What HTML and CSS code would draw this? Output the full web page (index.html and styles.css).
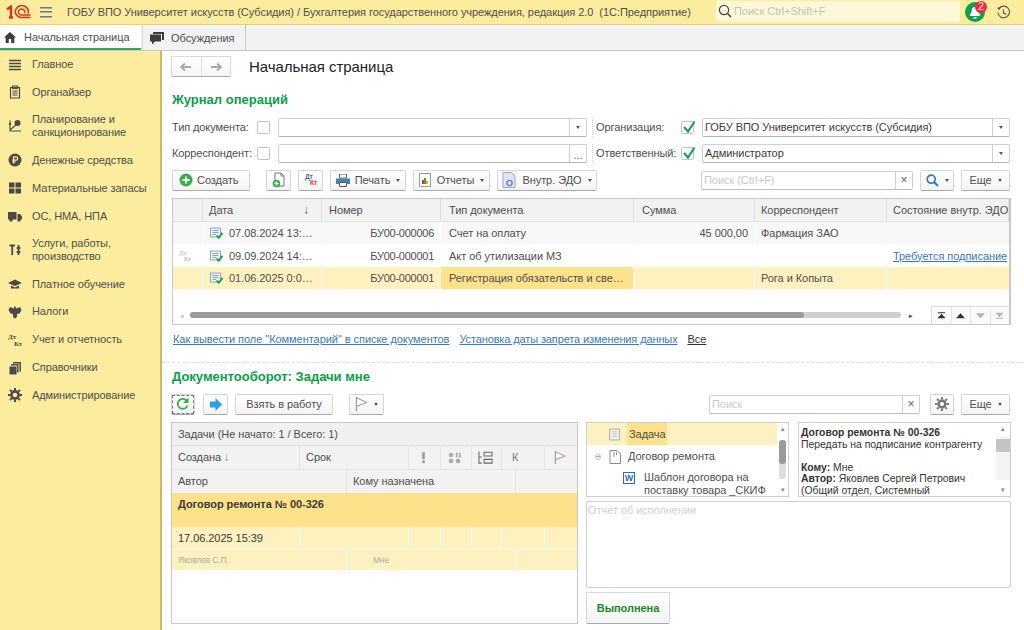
FILE: index.html
```html
<!DOCTYPE html>
<html lang="ru">
<head>
<meta charset="utf-8">
<title>1С:Предприятие</title>
<link rel="stylesheet" href="styles.css">
</head>
<body>
<header class="top">
  <svg class="logo" viewBox="0 0 25 14" width="25" height="14"><path d="M1 4.5 L5 1.5 V12 M3 12.5 H7" fill="none" stroke="#e0301e" stroke-width="2.4"/><path d="M22 8.5 A6.5 6 0 1 0 15 12.5 H24.5" fill="none" stroke="#e0301e" stroke-width="1.6"/><path d="M18.5 8.5 A3.2 3 0 1 0 15 10.2 H24.5" fill="none" stroke="#e0301e" stroke-width="1.4" transform="translate(0,-.2)"/></svg>
  <span class="burger"><i></i><i></i><i></i></span>
  <span class="app-title">ГОБУ ВПО Университет искусств (Субсидия) / Бухгалтерия государственного учреждения, редакция 2.0&nbsp; (1С:Предприятие)</span>
  <div class="global-search">
    <svg viewBox="0 0 14 14" width="14" height="14"><circle cx="6" cy="6" r="4.6" fill="none" stroke="#444" stroke-width="1.2"/><path d="M9.5 9.5 L13 13" stroke="#444" stroke-width="1.6"/></svg>
    <span>Поиск Ctrl+Shift+F</span>
  </div>
  <div class="bell">
    <svg viewBox="0 0 20 20" width="20" height="20"><circle cx="10" cy="10" r="10" fill="#0da14f"/><path d="M10 5 C7 5 6.5 8 6.5 10 L4.5 14 H15.5 L13.5 10 C13.5 8 13 5 10 5Z M8.5 15 H11.5 V16.5 H8.5Z" fill="#fff"/></svg>
    <b>2</b>
  </div>
  <svg class="history" viewBox="0 0 16 16" width="15" height="15"><path d="M3 4 A6.2 6.2 0 1 1 2 8" fill="none" stroke="#555" stroke-width="1.2"/><path d="M1 3 L3.6 5.6 L5 2.4Z" fill="#555"/><path d="M8 4.5 V8.5 L11 10" fill="none" stroke="#555" stroke-width="1.2"/></svg>
</header>
<nav class="tabs">
  <div class="tab active">
    <svg viewBox="0 0 12 11" width="12" height="11"><path d="M6 0 L12 5.5 H10.3 V11 H7.2 V7 H4.8 V11 H1.7 V5.5 H0Z" fill="#3d3d3d"/></svg>
    <span>Начальная страница</span>
  </div>
  <div class="tab second">
    <svg viewBox="0 0 14 13" width="14" height="13"><path d="M3 0 H14 V8 H12 V2 H3Z" fill="#3d3d3d"/><path d="M0 2.5 H11 V9.5 H5 L2 12.5 V9.5 H0Z" fill="#3d3d3d"/></svg>
    <span>Обсуждения</span>
  </div>
</nav>
<div class="shell">
  <aside class="side">
    <a class="nav"><svg viewBox="0 0 14 14"><path d="M1 2.5H13M1 5.5H13M1 8.5H13M1 11.5H13" stroke="#4a4a4a" stroke-width="1.7"/></svg><span>Главное</span></a>
    <a class="nav"><svg viewBox="0 0 14 14"><path d="M2.5 2.5H11.5V13H2.5Z M4.5 1H9.5V3.5H4.5Z M4.5 6H9.5M4.5 8H9.5M4.5 10H9.5" fill="none" stroke="#4a4a4a" stroke-width="1.2"/></svg><span>Органайзер</span></a>
    <a class="nav two"><svg viewBox="0 0 14 14"><path d="M2 1.5V12H13M2 11L9 5" fill="none" stroke="#4a4a4a" stroke-width="1.1"/><circle cx="9.5" cy="4" r="3" fill="#4a4a4a"/><circle cx="2" cy="5" r="1.2" fill="#4a4a4a"/></svg><span>Планирование и<br>санкционирование</span></a>
    <a class="nav"><svg viewBox="0 0 14 14"><circle cx="7" cy="7" r="6.5" fill="#4a4a4a"/><path d="M5.6 10.5V3.8H8A1.7 1.7 0 0 1 8 7.2H4.4M4.4 8.8H7.5" fill="none" stroke="#fbec9e" stroke-width="1.2"/></svg><span>Денежные средства</span></a>
    <a class="nav"><svg viewBox="0 0 14 14"><path d="M1 1.5H6.5V6.5H1ZM7.5 1.5H13V6.5H7.5ZM1 7.5H6.5V12.5H1ZM7.5 7.5H13V12.5H7.5Z" fill="#4a4a4a"/></svg><span>Материальные запасы</span></a>
    <a class="nav"><svg viewBox="0 0 14 14"><path d="M0 3H8.5V10.5H0ZM9.5 5H12L14 7.5V10.5H9.5Z" fill="#4a4a4a"/><circle cx="3" cy="11" r="1.7" fill="#4a4a4a"/><circle cx="11" cy="11" r="1.7" fill="#4a4a4a"/></svg><span>ОС, НМА, НПА</span></a>
    <a class="nav two"><svg viewBox="0 0 14 14"><path d="M1.5 2.5H7M4.2 2.5V12M10.5 2V12M8.7 5H12.3M8.7 9H12.3" fill="none" stroke="#4a4a4a" stroke-width="1.8"/></svg><span>Услуги, работы,<br>производство</span></a>
    <a class="nav"><svg viewBox="0 0 14 14"><path d="M7 2.5L14 6L7 9L0 6Z M3 8.5L7 10.5L11 8.5V11.5H3Z" fill="#4a4a4a"/></svg><span>Платное обучение</span></a>
    <a class="nav"><svg viewBox="0 0 14 14"><path d="M7 1L8.5 3.5L12 2L13.5 5L11.5 8.5L9 9V12L7 13.5L5 12V9L2.5 8.5L.5 5L2 2L5.5 3.5Z" fill="#4a4a4a"/></svg><span>Налоги</span></a>
    <a class="nav"><svg viewBox="0 0 14 14"><text x="0" y="6" class="dk">Дт</text><text x="6" y="13" class="dk">Кт</text></svg><span>Учет и отчетность</span></a>
    <a class="nav"><svg viewBox="0 0 14 14"><path d="M5 1H13V10.5H11.5V2.5H5Z M3 3H10.5V11.5H9V4.5H3Z M1.5 5.5H8.5V13.5H1.5Z" fill="#4a4a4a"/></svg><span>Справочники</span></a>
    <a class="nav"><svg viewBox="0 0 14 14"><circle cx="7" cy="7" r="3.6" fill="none" stroke="#4a4a4a" stroke-width="2.6"/><path d="M7 0V14M0 7H14M2 2L12 12M12 2L2 12" stroke="#4a4a4a" stroke-width="2" stroke-dasharray="2.2 9.6 2.2 0"/></svg><span>Администрирование</span></a>
  </aside>

  <main class="main">
    <div class="pagehead">
      <div class="history-btns">
        <span class="hb"><svg viewBox="0 0 12 10" width="12" height="10"><path d="M1 5H11M5 1.5L1 5L5 8.5" fill="none" stroke="#a8a8a8" stroke-width="1.8"/></svg></span>
        <span class="hb"><svg viewBox="0 0 12 10" width="12" height="10"><path d="M1 5H11M7 1.5L11 5L7 8.5" fill="none" stroke="#a8a8a8" stroke-width="1.8"/></svg></span>
      </div>
      <h1>Начальная страница</h1>
    </div>

    <h2 class="group journal">Журнал операций</h2>

    <div class="filter">
      <label>Тип документа:</label><span class="cb"></span>
      <div class="field w309"><span class="val"></span><span class="drop"><i class="tri"></i></span></div>
      <span class="sep"></span>
      <label>Организация:</label><span class="cb"><svg viewBox="0 0 14 14"><path d="M2 7L6 11.5L12.5 1.5" fill="none" stroke="#0da14f" stroke-width="2"/></svg></span>
      <div class="field w308"><span class="val">ГОБУ ВПО Университет искусств (Субсидия)</span><span class="drop"><i class="tri"></i></span></div>
    </div>
    <div class="filter second">
      <label>Корреспондент:</label><span class="cb"></span>
      <div class="field w309"><span class="val"></span><span class="drop dots">...</span></div>
      <span class="sep"></span>
      <label>Ответственный:</label><span class="cb"><svg viewBox="0 0 14 14"><path d="M2 7L6 11.5L12.5 1.5" fill="none" stroke="#0da14f" stroke-width="2"/></svg></span>
      <div class="field w308"><span class="val">Администратор</span><span class="drop"><i class="tri"></i></span></div>
    </div>

    <div class="toolbar tb1">
      <button class="btn create"><svg viewBox="0 0 14 14" width="14" height="14"><circle cx="7" cy="7" r="6.5" fill="#36ae4a"/><path d="M7 3.5V10.5M3.5 7H10.5" stroke="#fff" stroke-width="2"/></svg>Создать</button>
      <button class="btn ico gap16"><svg viewBox="0 0 16 16" width="16" height="16"><path d="M4 1H10L13 4V14H4Z" fill="#fff" stroke="#777"/><path d="M10 1V4H13" fill="none" stroke="#777"/><circle cx="5.5" cy="11.5" r="3.8" fill="#36ae4a"/><path d="M5.5 9.5V13.5M3.5 11.5H7.5" stroke="#fff" stroke-width="1.3"/></svg></button>
      <button class="btn ico gap7 dtkt"><span class="d">Дт</span><span class="k">Кт</span></button>
      <button class="btn print gap7"><svg viewBox="0 0 14 13" width="14" height="13"><path d="M3.5 0H10.5V4H3.5Z" fill="#fff" stroke="#3d6a96"/><path d="M0 4.5H14V10H11V8H3V10H0Z" fill="#4a7fb0"/><path d="M3.5 8.5H10.5V12.5H3.5Z" fill="#fff" stroke="#555"/></svg>Печать<i class="tri"></i></button>
      <button class="btn reports gap8"><svg viewBox="0 0 12 14" width="12" height="14"><path d="M.5 .5H11.5V13.5H.5Z" fill="#fff" stroke="#999"/><path d="M3 7H5V11H3Z" fill="#d33"/><path d="M5 5H7V11H5Z" fill="#3a3"/><path d="M7 8H9V11H7Z" fill="#e8b020"/></svg>Отчеты<i class="tri"></i></button>
      <button class="btn edo gap7"><svg viewBox="0 0 14 16" width="14" height="16"><path d="M1 .5H9.5L13 4V15.5H1Z" fill="#dfe6f2" stroke="#9aa8c4"/><circle cx="7.5" cy="11" r="2.6" fill="none" stroke="#6a7fc0" stroke-width="1.4"/></svg>Внутр. ЭДО<i class="tri"></i></button>
      <div class="search s212 push"><span class="ph">Поиск (Ctrl+F)</span><span class="clear">×</span></div>
      <button class="btn find gap7"><svg viewBox="0 0 13 13" width="13" height="13"><circle cx="5.2" cy="5.2" r="4" fill="none" stroke="#2b7bbd" stroke-width="1.7"/><path d="M8 8L12 12" stroke="#2b7bbd" stroke-width="2"/></svg><i class="tri"></i></button>
      <button class="btn more gap7">Еще<i class="tri"></i></button>
    </div>

    <section class="table">
      <div class="tr thead">
        <div class="td"></div><div class="td date-h">Дата<span class="sort">↓</span></div><div class="td">Номер</div><div class="td">Тип документа</div><div class="td">Сумма</div><div class="td">Корреспондент</div><div class="td">Состояние внутр. ЭДО</div>
      </div>
      <div class="tr r1">
        <div class="td"></div>
        <div class="td dt"><svg class="docico" viewBox="0 0 13 12"><use href="#doc"/></svg>07.08.2024 13:…</div><div class="td num">БУ00-000006</div><div class="td">Счет на оплату</div><div class="td sum">45 000,00</div><div class="td">Фармация ЗАО</div><div class="td"></div>
      </div>
      <div class="tr r2">
        <div class="td dk-cell"><span class="d">Дт</span><span class="k">Кт</span></div>
        <div class="td dt"><svg class="docico" viewBox="0 0 13 12"><use href="#doc"/></svg>09.09.2024 14:…</div><div class="td num">БУ00-000001</div><div class="td">Акт об утилизации МЗ</div><div class="td"></div><div class="td"></div><div class="td"><a class="link">Требуется подписание</a></div>
      </div>
      <div class="tr r3">
        <div class="td"></div>
        <div class="td dt"><svg class="docico" viewBox="0 0 13 12"><use href="#doc"/></svg>01.06.2025 0:0…</div><div class="td num">БУ00-000001</div><div class="td cur">Регистрация обязательств и све…</div><div class="td"></div><div class="td">Рога и Копыта</div><div class="td"></div>
      </div>
      <div class="scrollrow">
        <span class="arr">◂</span>
        <div class="track"><div class="thumb"></div></div>
        <span class="arr dark">▸</span>
        <div class="pager">
          <span><svg viewBox="0 0 10 7"><path d="M1 0H9V1H1ZM5 1.5L9.5 6.5H.5Z" fill="#333"/></svg></span>
          <span><svg viewBox="0 0 10 7"><path d="M5 1L10 6.5H0Z" fill="#333"/></svg></span>
          <span><svg viewBox="0 0 10 7"><path d="M0 1H10L5 6.5Z" fill="#b5b5b5"/></svg></span>
          <span><svg viewBox="0 0 10 7"><path d="M.5 .5H9.5L5 5.5ZM1 6H9V7H1Z" fill="#b5b5b5"/></svg></span>
        </div>
      </div>
    </section>

    <div class="links">
      <a class="link">Как вывести поле "Комментарий" в списке документов</a>
      <a class="link">Установка даты запрета изменения данных</a>
      <a class="all">Все</a>
    </div>

    <hr class="divider">

    <h2 class="group flow">Документооборот: Задачи мне</h2>

    <div class="toolbar tb2">
      <button class="btn ico focus"><svg viewBox="0 0 14 14" width="14" height="14"><path d="M11.5 8.5A5 5 0 1 1 10.5 3.5" fill="none" stroke="#36ae4a" stroke-width="1.8"/><path d="M12.5 .5V6H7Z" fill="#36ae4a"/></svg></button>
      <button class="btn ico g8"><svg viewBox="0 0 12 13" width="12" height="13"><path d="M0 3.5H5.5V0L12 6.5L5.5 13V9.5H0Z" fill="#2f9fe0"/></svg></button>
      <button class="btn take g7">Взять в работу</button>
      <button class="btn flag g16"><svg viewBox="0 0 13 14" width="13" height="14"><path d="M1.5 0V14" stroke="#999" stroke-width="1.3"/><path d="M2 1L12 5.5L2 9" fill="#fff" stroke="#a88" stroke-width="1"/></svg><i class="tri"></i></button>
      <div class="search s211 push"><span class="ph">Поиск</span><span class="clear">×</span></div>
      <button class="btn ico gear gap10"><svg viewBox="0 0 14 14" width="14" height="14"><circle cx="7" cy="7" r="3.4" fill="none" stroke="#777" stroke-width="2.6"/><path d="M7 0V14M0 7H14M2 2L12 12M12 2L2 12" stroke="#777" stroke-width="2" stroke-dasharray="2.2 9.6 2.2 0"/></svg></button>
      <button class="btn more gap7">Еще<i class="tri"></i></button>
    </div>

    <div class="tasks-wrap">
      <section class="tasks">
        <div class="cap">Задачи (Не начато: 1 / Всего: 1)</div>
        <div class="trow h1"><div>Создана <span class="sort2">↓</span></div><div>Срок</div>
          <div class="c"><svg viewBox="0 0 6 14" width="5" height="12"><path d="M1.5 0H4.5V8.5H1.5Z" fill="#999"/><circle cx="3" cy="11.5" r="1.8" fill="#999"/></svg></div>
          <div class="c"><svg viewBox="0 0 16 13" width="14" height="12"><g fill="#aaa"><circle cx="3.5" cy="3" r="2.6"/><path d="M9 .5H11V5.5H9ZM12.5 .5H14.5V5.5H12.5Z"/><circle cx="3.5" cy="10" r="2.6"/><circle cx="11.5" cy="10" r="2.6"/></g></svg></div>
          <div class="c"><svg viewBox="0 0 16 13" width="15" height="13"><path d="M1 0V12.5H4M1 6H4M6.5 1H15V5H6.5ZM6.5 8.5H15V12.5H6.5Z" fill="none" stroke="#666" stroke-width="1.1"/></svg></div>
          <div class="k">К</div>
          <div class="c"><svg viewBox="0 0 13 14" width="12" height="13"><path d="M1.5 0V14" stroke="#999" stroke-width="1.3"/><path d="M2 1L12 5.5L2 9" fill="#fff" stroke="#a88" stroke-width="1"/></svg></div>
        </div>
        <div class="trow h2"><div>Автор</div><div>Кому назначена</div><div></div></div>
        <div class="grp">Договор ремонта № 00-326</div>
        <div class="trow d1"><div>17.06.2025 15:39</div><div></div><div></div><div></div><div></div><div></div><div></div></div>
        <div class="trow d2"><div>Яковлев С.П.</div><div class="to">Мне</div><div></div></div>
      </section>

      <div class="rightcol">
        <div class="panels">
          <div class="panel tree">
            <div class="tree-body">
              <div class="node sel"><svg viewBox="0 0 12 14" width="11" height="13"><path d="M.5 1H11.5V13H.5Z" fill="#f1efe8" stroke="#a8a8a8"/><path d="M3 4H9M3 6.5H9M3 9H9" stroke="#c8c8c8"/></svg><span>Задача</span></div>
              <div class="node doc"><i class="minus"></i><svg viewBox="0 0 12 14" width="12" height="14"><path d="M1 .5H8L11.5 4V13.5H1Z" fill="#fff" stroke="#888"/><path d="M5 2V7M7.5 2V5" stroke="#888"/></svg><span>Договор ремонта</span></div>
              <div class="node word"><b class="w">W</b><span>Шаблон договора на поставку товара _СКИФ</span></div>
            </div>
            <div class="vscroll light"><em>▴</em><s></s><em>▾</em></div>
          </div>
          <div class="panel info">
            <div class="info-body"><b>Договор ремонта № 00-326</b><br>Передать на подписание контрагенту<br><br><b>Кому:</b> Мне<br><b>Автор:</b> Яковлев Сергей Петрович<br>(Общий отдел, Системный</div>
            <div class="vscroll square"><em>▴</em><s></s><em>▾</em></div>
          </div>
        </div>
        <div class="report">Отчет об исполнении</div>
        <button class="btn done">Выполнена</button>
      </div>
    </div>
  </main>
</div>
<svg class="defs" width="0" height="0"><defs><g id="doc"><path d="M.5 1H10.5V10H.5Z" fill="#eef2f6" stroke="#8fa3b8"/><path d="M2.5 3.5H8.5M2.5 5.5H8.5M2.5 7.5H6" stroke="#8fa3b8"/><path d="M6.5 8.5L8.7 10.8L12.5 5.8" fill="none" stroke="#19a538" stroke-width="1.8"/></g></defs></svg>
</body>
</html>
```
FILE: styles.css
```css
* { box-sizing: border-box; }
html, body { margin: 0; padding: 0; }
body {
  width: 1024px; height: 630px; overflow: hidden; background: #fff;
  font: 11px/13px "Liberation Sans", Arial, sans-serif; color: #4f4f4f; letter-spacing: -0.05px;
  display: flex; flex-direction: column;
}
.defs { position: absolute; }
a { cursor: pointer; }

/* top bar */
.top {
  height: 25px; flex: none; display: flex; align-items: center;
  background: #fbec9e; border-bottom: 1px solid #e2cf7a; padding-left: 6px;
}
.logo { flex: none; }
.burger { width: 12px; height: 11px; margin-left: 9px; display: flex; flex-direction: column; justify-content: space-between; flex: none; }
.burger i { display: block; height: 2px; background: #777; border-bottom: 1px solid #aaa; }
.app-title { margin-left: 15px; white-space: nowrap; width: 649px; flex: none; }
.global-search {
  width: 244px; height: 21px; flex: none; background: #fef7d8; border-radius: 2px;
  display: flex; align-items: center; padding-left: 2px; color: #c4c4b4; margin-top: -2px;
}
.global-search svg { margin-right: 2px; }
.bell { position: relative; width: 20px; height: 20px; margin-left: 5px; flex: none; }
.bell svg { display: block; }
.bell b {
  position: absolute; top: -1px; right: -2px; width: 12px; height: 12px; border-radius: 50%;
  background: #ee2b3a; color: #fff; font-size: 10px; line-height: 12px; text-align: center; font-weight: 400;
}
.history { margin-left: 11px; flex: none; }

/* tabs */
.tabs { height: 26px; flex: none; display: flex; background: #f2f2f2; border-bottom: 1px solid #c8c8c8; }
.tab { display: flex; align-items: center; height: 25px; padding-top: 1px; }
.tab.active { width: 141px; background: #fff; border-bottom: 2px solid #2eaa5e; padding-left: 4px; }
.tab.active span { margin-left: 8px; }
.tab.second { width: 104px; border-left: 1px solid #d8d8d8; border-right: 1px solid #c8c8c8; margin-left: 1px; padding-left: 7px; }
.tab.second span { margin-left: 7px; }

.shell { flex: 1; display: flex; min-height: 0; }

/* sidebar */
.side { width: 162px; flex: none; background: #fbec9e; border-right: 2px solid #cdb95e; }
.nav { height: 27.8px; display: flex; align-items: center; padding-left: 8px; letter-spacing: -0.1px; }
.nav:first-child { margin-top: -0.3px; }
.nav.two { height: 40.3px; }
.nav svg { width: 14px; height: 14px; flex: none; margin-right: 10px; }
.nav span { line-height: 13px; }
.dk { font: 700 7px "Liberation Serif", serif; fill: #4a4a4a; }

/* main */
.main { flex: 1; min-width: 0; padding: 5px 14px 0 9px; }
.pagehead { display: flex; align-items: center; height: 21px; }
.history-btns {
  width: 60px; height: 21px; display: flex; border: 1px solid #d8d8d8; border-bottom-color: #aaa; border-radius: 2px;
  background: linear-gradient(#fff, #f4f4f4);
}
.hb { flex: 1; display: flex; align-items: center; justify-content: center; }
.hb + .hb { border-left: 1px solid #e0e0e0; }
h1 { font: 400 15px/18px "Liberation Sans", Arial, sans-serif; color: #222; margin: 0 0 0 18px; }
.group { font: 700 13px/16px "Liberation Sans", Arial, sans-serif; color: #0b9e4a; margin: 0 0 0 1px; letter-spacing: 0; }
.journal { margin-top: 15px; }

.filter { display: flex; align-items: center; height: 19px; margin-left: 1px; width: 838px; margin-top: 10px; }
.filter.second { margin-top: 7px; }
.filter label { width: 85px; flex: none; white-space: nowrap; letter-spacing: -0.1px; }
.cb { width: 13px; height: 13px; flex: none; margin-right: 8px; border: 1px solid #c4c4c4; border-radius: 2px; background: #fff; position: relative; }
.cb svg { position: absolute; left: 0; top: -2px; width: 14px; height: 14px; }
.field { height: 19px; display: flex; border: 1px solid #cfcfcf; border-bottom-color: #b4b4b4; border-radius: 2px; flex: none; background: #fff; }
.w309 { width: 309px; }
.w308 { width: 308px; }
.val { flex: 1; padding-left: 2px; line-height: 17px; color: #3c3c3c; white-space: nowrap; }
.drop { width: 17px; border-left: 1px solid #cfcfcf; display: flex; align-items: center; justify-content: center; }
.dots { color: #666; line-height: 14px; align-items: flex-end; }
.sep { width: 9px; height: 19px; flex: none; position: relative; }
.sep::after { content: ""; position: absolute; left: 5px; top: 0; height: 19px; border-left: 1px dotted #d0d0d0; }
.tri { display: inline-block; width: 0; height: 0; border: 2.5px solid transparent; border-top: 3px solid #555; border-bottom: 0; flex: none; }

.toolbar { display: flex; align-items: center; height: 22px; }
.tb1 { margin-top: 6px; margin-left: 1px; width: 838px; }
.btn {
  height: 21px; border: 1px solid #d6d6d6; border-bottom: 1px solid #a8a8a8; border-radius: 2px;
  background: linear-gradient(#fff, #f3f3f3); display: flex; align-items: center; justify-content: center;
  font: 11px/13px "Liberation Sans", Arial, sans-serif; letter-spacing: inherit; color: #4f4f4f; padding: 0; flex: none;
}
.btn .tri { margin-left: 6px; }
.create { width: 78px; justify-content: flex-start; padding-left: 6px; }
.create svg { margin-right: 4px; }
.ico { width: 25px; }
.gap16 { margin-left: 16px; }
.gap7 { margin-left: 7px; }
.gap8 { margin-left: 7px; }
.gap10 { margin-left: 10px; }
.g7 { margin-left: 7px; }
.g8 { margin-left: 8px; }
.g16 { margin-left: 16px; }
.dtkt { flex-direction: column; align-items: flex-start; padding-left: 6px; font: 700 6.5px/6.5px "Liberation Sans", sans-serif; }
.dtkt .d { color: #3f6f9f; }
.dtkt .k { color: #e03030; margin-left: 5px; }
.print { width: 76px; }
.print svg { margin-right: 5px; }
.reports { width: 77px; }
.reports svg { margin-right: 6px; }
.edo { width: 100px; }
.edo svg { margin-right: 6px; }
.search { height: 19px; display: flex; border: 1px solid #cfcfcf; border-bottom-color: #bbb; border-radius: 2px; background: #fff; flex: none; }
.push { margin-left: auto; }
.s212 { width: 212px; }
.s211 { width: 211px; }
.ph { flex: 1; padding-left: 2px; line-height: 17px; color: #c8c8c8; }
.clear { width: 17px; border-left: 1px solid #cfcfcf; text-align: center; line-height: 17px; font-size: 12px; color: #666; }
.find { width: 34px; }
.more { width: 49px; }

/* table */
.table { margin-top: 7px; margin-left: 1px; width: 839px; height: 127px; border: 1px solid #c8c8c8; border-right-width: 2px; display: flex; flex-direction: column; }
.tr { display: grid; grid-template-columns: 30px 119px 119px 193px 121px 132px 1fr; }
.td { padding: 0 6px; white-space: nowrap; overflow: hidden; display: flex; align-items: center; border-right: 1px solid #fff; }
.td:last-child { border-right: 0; }
.td:nth-child(3) { padding-left: 7px; }
.td:nth-child(4), .td:nth-child(5) { padding-left: 8px; }
.thead { height: 23px; background: #f2f2f2; border-bottom: 1px solid #e3e3e3; }
.thead .td { border-right: 1px solid #dedede; }
.date-h { justify-content: space-between; padding-right: 12px; }
.sort { font-size: 12px; color: #555; }
.r1 { height: 23px; background: #f7f7f7; border-bottom: 1px solid #fff; }
.r2 { height: 22px; background: #fff; }
.r3 { height: 23px; background: #fef1c0; border-bottom: 1px solid #fbf8ee; }
.dt { padding-left: 7px; }
.docico { width: 13px; height: 12px; margin-right: 6px; flex: none; }
.td.num { justify-content: flex-end; padding-right: 6px; letter-spacing: -0.25px; }
.sum { justify-content: flex-end; padding-right: 6px; }
.cur { background: #fde28b; }
.dk-cell { flex-direction: column; align-items: flex-start; justify-content: center; font: 6.5px/6.5px "Liberation Serif", serif; color: #aaa; }
.dk-cell .k { margin-left: 5px; }
.link { color: #3a76c4; text-decoration: underline; text-underline-offset: 1px; white-space: nowrap; }
.link + .link { letter-spacing: -0.12px; }
.scrollrow { flex: 1; display: flex; align-items: flex-end; }
.arr { width: 17px; text-align: center; font-size: 7px; color: #bbb; line-height: 17px; height: 17px; flex: none; }
.arr.dark { color: #444; width: 19px; }
.track { width: 711px; height: 6px; margin-bottom: 6px; background: #d0d0d0; border-radius: 3px; flex: none; }
.thumb { width: 614px; height: 6px; background: #9a9a9a; border-radius: 3px; }
.pager { margin-left: auto; display: flex; border-top: 1px solid #ddd; border-left: 1px solid #ddd; height: 18px; width: 78px; }
.pager span { flex: 1; display: flex; align-items: center; justify-content: center; border-right: 1px solid #e4e4e4; background: #f9f9f9; }
.pager span:last-child { border-right: 0; }
.pager svg { width: 9px; height: 7px; }

.links { display: flex; margin-top: 8px; margin-left: 2px; height: 13px; gap: 10px; }
.all { color: #333; text-decoration: underline; }
.divider { border: 0; border-top: 1px dashed #dcdcdc; margin: 16px -14px 0 -9px; }
.flow { margin-top: 6px; }

/* second toolbar */
.tb2 { margin-top: 8px; height: 22px; width: 839px; }
.focus { width: 24px; outline: 1px dashed #777; outline-offset: -2px; }
.take { width: 98px; }
.flag { width: 35px; }
.gear { width: 24px; }

/* tasks */
.tasks-wrap { display: flex; margin-top: 7px; height: 202px; width: 840px; }
.tasks { width: 407px; height: 202px; flex: none; border: 1px solid #c8c8c8; }
.cap { height: 23px; line-height: 22px; background: #f0f0f0; padding-left: 6px; border-bottom: 1px solid #e0e0e0; }
.trow { display: grid; }
.trow > div { display: flex; align-items: center; padding-left: 6px; border-right: 1px solid #e3e3e3; white-space: nowrap; }
.trow > div:last-child { border-right: 0; }
.h1, .d1 { grid-template-columns: 128px 109px 32px 31px 30px 43px 1fr; }
.h2, .d2 { grid-template-columns: 175px 169px 1fr; }
.h1 { height: 24px; background: #f2f2f2; border-bottom: 1px solid #e3e3e3; }
.h2 { height: 23px; background: #f2f2f2; }
.trow .c { padding: 0 3px 0 0; justify-content: center; }
.trow .k { padding-left: 10px; color: #777; }
.sort2 { font-size: 12px; margin-left: 2px; color: #888; }
.grp { height: 34px; background: #fde28b; font-weight: 700; color: #3a3a3a; padding: 4px 0 0 6px; line-height: 13px; border-top: 1px solid #fbdf8a; }
.d1 { height: 23px; background: #fef1c0; color: #3a3a3a; border-bottom: 1px solid #fbf8ee; }
.d2 { height: 20px; background: #fef1c0; font-size: 8.3px; color: #aaa; }
.d1 > div, .d2 > div { border-right-color: #fff; }
.d2 .to { padding-left: 26px; }

/* right column */
.rightcol { width: 425px; margin-left: 8px; flex: none; }
.panels { display: flex; justify-content: space-between; height: 75px; }
.panel { border: 1px solid #cfcfcf; display: flex; overflow: hidden; background: #fff; }
.tree { width: 203px; }
.info { width: 213px; }
.tree-body { flex: 1; min-width: 0; }
.node { display: flex; align-items: center; height: 22px; }
.node.sel { background: #fef1c0; padding-left: 22px; }
.node.sel span { background: #fde28b; height: 22px; line-height: 22px; padding-left: 2px; margin-left: 7px; width: 40px; }
.node.doc { padding-left: 8px; height: 23px; }
.minus { width: 6px; height: 6px; border: 1px solid #bbb; border-radius: 50%; margin-right: 8px; flex: none; position: relative; }
.minus::after { content: ""; position: absolute; left: 0; top: 1px; width: 4px; height: 1px; background: #aaa; }
.node.doc span { margin-left: 7px; }
.node.word { align-items: flex-start; padding: 4px 0 0 36px; height: 30px; }
.word span { line-height: 13px; margin-left: 9px; width: 140px; margin-top: -1px; }
.w { width: 12px; height: 12px; border: 1px solid #2b6cb0; color: #2b6cb0; font: 700 9px/10px "Liberation Sans", sans-serif; text-align: center; flex: none; }
.vscroll { width: 11px; flex: none; display: flex; flex-direction: column; font-size: 7px; line-height: 12px; text-align: center; color: #888; }
.vscroll em { font-style: normal; height: 12px; }
.vscroll s { flex: 1; display: block; }
.vscroll.light s { background: #dedede; width: 7px; margin: 5px 2px; border-radius: 3px; }
.vscroll.light s::before { content: ""; display: block; height: 24px; width: 7px; background: #9a9a9a; border-radius: 3px; }
.vscroll.square { width: 14px; }
.vscroll.square s { background: #f4f4f4; margin: 2px 0 4px; }
.vscroll.square s::before { content: ""; display: block; height: 13px; background: #c4c4c4; margin-top: 2px; }
.info-body { flex: 1; min-width: 0; padding: 4px 0 0 2px; color: #333; font-size: 10.4px; line-height: 11.6px; white-space: nowrap; overflow: hidden; letter-spacing: 0; }
.report { height: 87px; margin-top: 4px; border: 1px solid #cfcfcf; border-radius: 2px; color: #cfcfcf; padding: 2px 1px; }
.done { width: 84px; height: 32px; margin-top: 4px; color: #178a1f; font-weight: 700; }
```
